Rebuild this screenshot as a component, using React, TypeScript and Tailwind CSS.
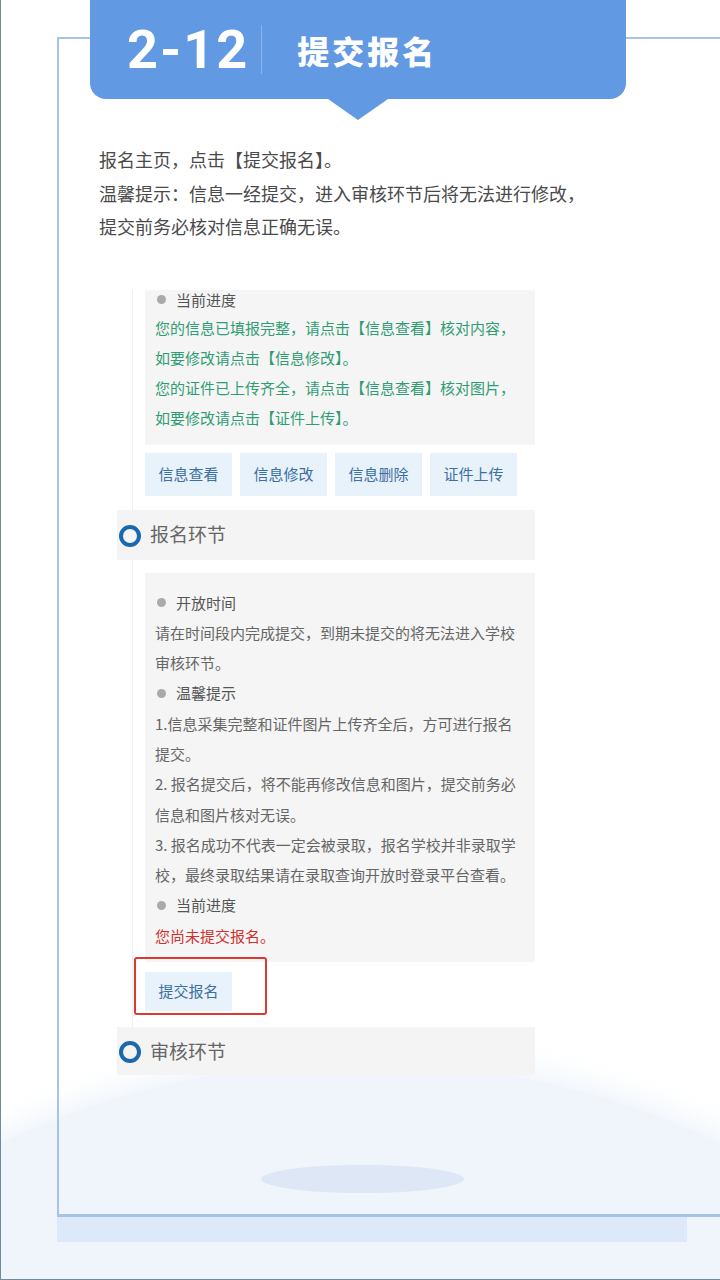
const greenLines = [
  '您的信息已填报完整，请点击【信息查看】核对内容，',
  '如要修改请点击【信息修改】。',
  '您的证件已上传齐全，请点击【信息查看】核对图片，',
  '如要修改请点击【证件上传】。',
];

const tipLines = [
  '1.信息采集完整和证件图片上传齐全后，方可进行报名',
  '提交。',
  '2. 报名提交后，将不能再修改信息和图片，提交前务必',
  '信息和图片核对无误。',
  '3. 报名成功不代表一定会被录取，报名学校并非录取学',
  '校，最终录取结果请在录取查询开放时登录平台查看。',
];

function Bullet({ label }: { label: string }) {
  return (
    <div className="flex items-center whitespace-nowrap text-[#555]">
      <span className="ml-[2px] mr-[10px] h-[9px] w-[9px] rounded-full bg-[#aaaaaa]" />
      {label}
    </div>
  );
}

function StepHeader({ title, height }: { title: string; height: string }) {
  return (
    <div className={`flex w-[418px] items-center bg-[#f4f4f4] ${height}`}>
      <span className="ml-[2px] mt-[2px] h-[22px] w-[22px] rounded-full border-[4.5px] border-[#1a68ad]" />
      <span className="ml-[9px] text-[19px] text-[#666]">{title}</span>
    </div>
  );
}

export default function App() {
  return (
    <div className="relative h-[1280px] w-[720px] overflow-hidden border-b border-l border-[#6f8c9c] bg-white font-['Noto_Sans_CJK_SC',sans-serif]">
      {/* big pale arc at the bottom */}
      <div className="absolute left-[-480px] top-[1062px] h-[1680px] w-[1680px] rounded-full bg-[#f0f5fc] shadow-[0_0_24px_12px_rgba(240,245,252,0.9)]" />

      <div className="relative ml-[56px] mt-[37px] w-[700px]">
        <div className="relative h-[1180px] border-2 border-b-[3px] border-[#a8c3ea]">
          {/* title tab */}
          <div className="relative -mt-[39px] ml-[31px] flex h-[99px] w-[536px] items-center rounded-b-[16px] bg-[#6299e3] pl-[37px] text-white">
            <span className="font-['Roboto',sans-serif] text-[54px] font-bold leading-none tracking-[2px]">2-12</span>
            <span className="ml-[12px] h-[49px] w-px bg-[#8fb6ec]" />
            <span className="ml-[35px] text-[32px] font-black tracking-[3px]">提交报名</span>
            <span className="absolute left-[238px] top-full h-0 w-0 border-x-[30px] border-t-[21px] border-x-transparent border-t-[#6299e3]" />
          </div>

          {/* intro */}
          <div className="ml-[40px] mt-[44px] text-[18px] leading-[33.5px] text-[#4a4a4a]">
            <p>报名主页，点击【提交报名】。</p>
            <p>温馨提示：信息一经提交，进入审核环节后将无法进行修改，</p>
            <p>提交前务必核对信息正确无误。</p>
          </div>

          {/* screenshot of the registration page */}
          <div className="relative ml-[58px] mt-[46px] w-[418px]">
            <div className="ml-[15px] border-l border-[#efefef] pb-[14px] pl-[12px]">
              <div className="w-[390px] overflow-hidden bg-[#f5f5f5] pb-[12px] pl-[10px] text-[15px] leading-[30px]">
                <div className="-mt-[3px] h-[26px] leading-[26px]">
                  <Bullet label="当前进度" />
                </div>
                {greenLines.map((t) => (
                  <div key={t} className="whitespace-nowrap text-[#2f9d74]">{t}</div>
                ))}
              </div>
              <div className="mt-[8px] flex gap-[8px]">
                {['信息查看', '信息修改', '信息删除', '证件上传'].map((b) => (
                  <div key={b} className="flex h-[43px] w-[87px] items-center justify-center bg-[#e7f2fb] text-[15px] text-[#3d6f9f]">
                    {b}
                  </div>
                ))}
              </div>
            </div>

            <StepHeader title="报名环节" height="h-[50px]" />

            <div className="ml-[15px] border-l border-[#efefef] pb-[16px] pl-[12px] pt-[13px]">
              <div className="w-[390px] bg-[#f5f5f5] pb-[11px] pl-[10px] pt-[15px] text-[15px] leading-[30.3px] text-[#666]">
                <Bullet label="开放时间" />
                <div className="whitespace-nowrap">请在时间段内完成提交，到期未提交的将无法进入学校</div>
                <div>审核环节。</div>
                <Bullet label="温馨提示" />
                {tipLines.map((t) => (
                  <div key={t} className="whitespace-nowrap">{t}</div>
                ))}
                <Bullet label="当前进度" />
                <div className="text-[#d0312d]">您尚未提交报名。</div>
              </div>
              <div className="relative mt-[10px] w-fit">
                <div className="flex h-[39px] w-[87px] items-center justify-center bg-[#e7f2fb] text-[15px] text-[#3d6f9f]">
                  提交报名
                </div>
                <div className="absolute -left-[11px] -top-[15px] h-[58px] w-[133px] rounded-[3px] border-[2.5px] border-[#d93a33]" />
              </div>
            </div>

            <StepHeader title="审核环节" height="h-[48px]" />
          </div>

          {/* floor shadow */}
          <div className="absolute left-[202px] top-[1126px] h-[28px] w-[203px] rounded-[50%] bg-[#dde7f5]" />
        </div>
        <div className="h-[25px] w-[630px] bg-[#dde9f8]" />
      </div>
    </div>
  );
}
